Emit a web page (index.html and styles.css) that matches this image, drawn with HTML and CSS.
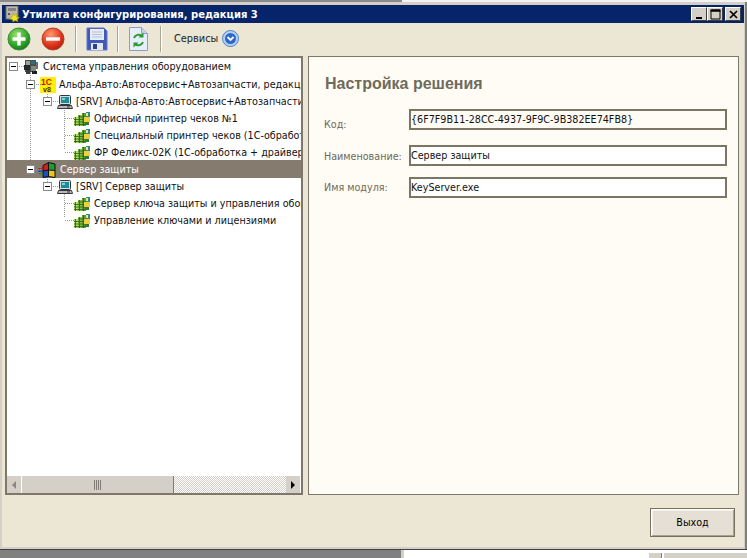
FILE: index.html
```html
<!DOCTYPE html>
<html lang="ru">
<head>
<meta charset="utf-8">
<title>Утилита конфигурирования, редакция 3</title>
<link rel="stylesheet" href="styles.css">
</head>
<body>
<svg class="defs" width="0" height="0" aria-hidden="true">
  <symbol id="i-sys" viewBox="0 0 16 16">
    <rect x="2" y="1" width="11" height="12" fill="#4a4f4a"/>
    <rect x="3" y="2" width="4" height="4" fill="#9aa39a"/>
    <rect x="8" y="2" width="4" height="3" fill="#2f6f7a"/>
    <rect x="1" y="6" width="6" height="5" fill="#23282a"/>
    <rect x="8" y="7" width="5" height="5" fill="#7e8a80"/>
    <rect x="3" y="11" width="4" height="4" fill="#3b3f3a"/>
    <rect x="9" y="12" width="5" height="3" fill="#1c1f1c"/>
    <rect x="13" y="3" width="2" height="7" fill="#6b736b"/>
  </symbol>
  <symbol id="i-mod" viewBox="0 0 16 16">
    <rect x="0" y="6" width="4" height="9" fill="#b4dc6a"/>
    <rect x="4" y="4" width="4" height="11" fill="#86c244"/>
    <rect x="8" y="2" width="4" height="13" fill="#5aa032"/>
    <rect x="12" y="1" width="4" height="7" fill="#2f8a8a"/>
    <path d="M0 8.500h12M0 11h12M0 13.500h12M4 6h8M1.500 6v9M5.500 4v11M9.500 2v13" stroke="#2c5a1c" stroke-width=".8"/>
    <rect x="10" y="6" width="6" height="5" fill="#f1cf3a"/>
    <rect x="11" y="11" width="4" height="3" fill="#2f7a3a"/>
    <rect x="12" y="2" width="2" height="3" fill="#f1e48a"/>
  </symbol>
  <symbol id="i-pc" viewBox="0 0 16 16">
    <rect x="2.500" y="1.500" width="11" height="9" rx="1" fill="#d8dce0" stroke="#33373c"/>
    <rect x="4" y="3" width="8" height="6" fill="#1b8f97"/>
    <rect x="5" y="4" width="3" height="2" fill="#7fd4d8"/>
    <path d="M1.500 11.500h13l1 3H.5z" fill="#b7bbc0" stroke="#33373c"/>
    <rect x="10" y="12.500" width="3" height="1" fill="#333"/>
  </symbol>
  <symbol id="i-win" viewBox="0 0 18 16">
    <path d="M5 3.500l5.500-3v7.500L5 9z" fill="#d0201c"/>
    <path d="M10.500 .5l6.500 1.500v6.500l-6.500-.5z" fill="#1f9b2f"/>
    <path d="M5 9l5.500-1v7.500L5 15.500z" fill="#1d4fc0"/>
    <path d="M10.500 8l6.500 .5V15l-6.500-.5z" fill="#e8c81e"/>
    <path d="M5 3.500l5.500-3 6.500 1.500V15.500L10.500 14.500 5 15.500z M10.500 .5v14M5 9l5.500-1 6.500 .5" fill="none" stroke="#111" stroke-width="1"/>
    <rect x="0" y="6" width="4.500" height="1.500" fill="#d0201c"/>
    <rect x="0" y="8.500" width="4.500" height="1.500" fill="#1d4fc0"/>
    <rect x="1" y="11" width="3.500" height="1.500" fill="#1f9b2f"/>
  </symbol>
</svg>

<div class="top-edge"><span class="top-dark"></span><span class="top-light"></span></div>

<main class="window">
  <header class="titlebar">
    <svg class="title-icon" width="16" height="16" viewBox="0 0 16 16" aria-hidden="true">
      <rect x="1" y="0" width="12" height="13" fill="#b9b7ae" stroke="#6d6c66"/>
      <rect x="3" y="2" width="8" height="3" fill="#85837c"/>
      <rect x="3" y="7" width="2" height="2" fill="#555"/>
      <path d="M8 7l1.500 2.500L12 8l-.5 3 3 .5-2.500 1.500 1 2.500-3-1-2 1.500-.5-2.500-3-.5 2.500-2z" fill="#f2e21a" stroke="#a89a00" stroke-width=".5"/>
    </svg>
    <h1 class="title">Утилита конфигурирования, редакция 3</h1>
    <div class="caption-buttons">
      <span class="cap-btn"><svg width="15" height="13" viewBox="0 0 15 13"><rect x="4" y="9" width="6" height="2" fill="#000"/></svg></span>
      <span class="cap-btn cap-max"><svg width="15" height="13" viewBox="0 0 15 13"><path d="M3 2h9v9H3z M3 3h9" fill="none" stroke="#000"/><rect x="2.500" y="1.500" width="10" height="2" fill="#000"/></svg></span>
      <span class="cap-btn"><svg width="15" height="13" viewBox="0 0 15 13"><path d="M4 3l7 7M11 3l-7 7" stroke="#000" stroke-width="1.700"/></svg></span>
    </div>
  </header>

  <nav class="toolbar">
    <svg class="tb-round" width="24" height="24" viewBox="0 0 24 24" aria-hidden="true">
      <defs><radialGradient id="gg" cx=".4" cy=".3" r=".8"><stop offset="0" stop-color="#9be36a"/><stop offset=".6" stop-color="#2fa52a"/><stop offset="1" stop-color="#0f6b1a"/></radialGradient>
      <radialGradient id="gr" cx=".4" cy=".3" r=".8"><stop offset="0" stop-color="#ff9a70"/><stop offset=".6" stop-color="#e0341c"/><stop offset="1" stop-color="#a3170c"/></radialGradient></defs>
      <circle cx="12" cy="12" r="11" fill="url(#gg)" stroke="#3c8a3a"/>
      <path d="M12 5.500v13M5.500 12h13" stroke="#fff" stroke-width="3.400"/>
    </svg>
    <svg class="tb-round tb-minus" width="24" height="24" viewBox="0 0 24 24" aria-hidden="true">
      <circle cx="12" cy="12" r="11" fill="url(#gr)" stroke="#b8402a"/>
      <path d="M5 12h14" stroke="#fff" stroke-width="3.400"/>
    </svg>
    <span class="tb-sep tb-sep-a"></span>
    <svg class="tb-save" width="22" height="24" viewBox="0 0 22 24" aria-hidden="true">
      <path d="M1 1h17l3 3v19H1z" fill="#4058b8" stroke="#5c74d0"/>
      <rect x="4" y="2" width="14" height="11" fill="#e8ecf6"/>
      <path d="M6 5h10M6 7.500h10M6 10h10" stroke="#b4bfd8"/>
      <rect x="5" y="16" width="12" height="7" fill="#e4e6ee"/>
      <rect x="7" y="17" width="4" height="5" fill="#2c3f8f"/>
    </svg>
    <span class="tb-sep tb-sep-b"></span>
    <svg class="tb-doc" width="19" height="24" viewBox="0 0 19 24" aria-hidden="true">
      <path d="M.5 .5h12l6 6v17H.5z" fill="#e7eefb" stroke="#8d9cc8"/>
      <path d="M12.500 .5v6h6" fill="#c8d4ee" stroke="#8d9cc8"/>
      <path d="M5 11a5 5 0 0 1 8-2" fill="none" stroke="#2a9a2a" stroke-width="2"/>
      <path d="M14.500 5.500v5h-5z" fill="#2a9a2a"/>
      <path d="M14 15a5 5 0 0 1-8 2" fill="none" stroke="#2a9a2a" stroke-width="2"/>
      <path d="M4.500 20.500v-5h5z" fill="#2a9a2a"/>
    </svg>
    <span class="tb-sep tb-sep-c"></span>
    <span class="tb-label">Сервисы</span>
    <svg class="tb-services" width="17" height="17" viewBox="0 0 17 17" aria-hidden="true">
      <circle cx="8.500" cy="8.500" r="8" fill="#b9d0f0" stroke="#4f7fc8"/>
      <circle cx="8.500" cy="8.500" r="5.500" fill="#2a68cc"/>
      <path d="M5.500 7l3 3 3-3" fill="none" stroke="#fff" stroke-width="1.800"/>
    </svg>
  </nav>

  <section class="panels">
    <div class="tree-panel">
      <div class="tree">
        <span class="guide guide-b"></span>
        <span class="guide guide-c"></span>
        <span class="guide guide-d"></span>
        <span class="guide guide-e"></span>
        <span class="guide guide-f"></span>

        <div class="row l0"><span class="toggle"></span><svg class="ico" width="16" height="16"><use href="#i-sys"/></svg><span class="lbl">Система управления оборудованием</span></div>
        <div class="row l1"><span class="toggle"></span><svg class="ico ico-1c" width="16" height="16" viewBox="0 0 16 16"><rect width="16" height="16" rx="1" fill="#ffef00"/><text class="logo-top" x="1" y="7.500">1С</text><text class="logo-bottom" x="3" y="14.500">v8</text></svg><span class="lbl">Альфа-Авто:Автосервис+Автозапчасти, редакция 4.1</span></div>
        <div class="row l2"><span class="toggle"></span><svg class="ico" width="16" height="16"><use href="#i-pc"/></svg><span class="lbl">[SRV] Альфа-Авто:Автосервис+Автозапчасти, редакция</span></div>
        <div class="row l3"><span class="elbow"></span><svg class="ico" width="16" height="16"><use href="#i-mod"/></svg><span class="lbl">Офисный принтер чеков №1</span></div>
        <div class="row l3"><span class="elbow"></span><svg class="ico" width="16" height="16"><use href="#i-mod"/></svg><span class="lbl">Специальный принтер чеков (1С-обработка + драйвер)</span></div>
        <div class="row l3"><span class="elbow"></span><svg class="ico" width="16" height="16"><use href="#i-mod"/></svg><span class="lbl">ФР Феликс-02К (1С-обработка + драйвер)</span></div>
        <div class="row l1 selected"><span class="toggle"></span><svg class="ico ico-win" width="18" height="16"><use href="#i-win"/></svg><span class="lbl">Сервер защиты</span></div>
        <div class="row l2"><span class="toggle"></span><svg class="ico" width="16" height="16"><use href="#i-pc"/></svg><span class="lbl">[SRV] Сервер защиты</span></div>
        <div class="row l3"><span class="elbow"></span><svg class="ico" width="16" height="16"><use href="#i-mod"/></svg><span class="lbl">Сервер ключа защиты и управления оборудованием</span></div>
        <div class="row l3"><span class="elbow"></span><svg class="ico" width="16" height="16"><use href="#i-mod"/></svg><span class="lbl">Управление ключами и лицензиями</span></div>
      </div>
      <div class="hscroll">
        <span class="sb-btn"><svg width="14" height="16" viewBox="0 0 14 16"><path d="M9 4v8L5 8z" fill="#8a8780"/></svg></span>
        <span class="sb-thumb"><svg width="8" height="10" viewBox="0 0 8 10"><path d="M.5 0v10M2.500 0v10M4.500 0v10M6.500 0v10" stroke="#807c75"/></svg></span>
        <span class="sb-track"></span>
        <span class="sb-btn"><svg width="14" height="16" viewBox="0 0 14 16"><path d="M5 4v8l4-4z" fill="#000"/></svg></span>
      </div>
    </div>

    <div class="detail">
      <h2 class="detail-title">Настройка решения</h2>
      <div class="field field-code"><span class="field-label">Код:</span><span class="field-value value-code">{6F7F9B11-28CC-4937-9F9C-9B382EE74FB8}</span></div>
      <div class="field field-name"><span class="field-label">Наименование:</span><span class="field-value">Сервер защиты</span></div>
      <div class="field field-module"><span class="field-label">Имя модуля:</span><span class="field-value">KeyServer.exe</span></div>
    </div>
  </section>

  <footer class="footer"><button class="exit" type="button">Выход</button></footer>
</main>

<div class="bottom-edge">
  <span class="be-gray"></span>
  <span class="be-light"></span>
  <div class="be-white"><span class="be-scroll-btn"></span><span class="be-scroll-bar"></span></div>
</div>
</body>
</html>
```

FILE: styles.css
```css
* { box-sizing: border-box; }
html, body { margin: 0; padding: 0; }
body {
  width: 747px;
  height: 558px;
  overflow: hidden;
  background: #808080;
  font-family: "DejaVu Sans", Tahoma, sans-serif;
  font-size: 9.600px;
  color: #000;
  display: flex;
  flex-direction: column;
}
.defs { position: absolute; }

.top-edge { height: 2px; display: flex; flex: none; }
.top-dark { width: 402px; background: #8a8a8a; }
.top-light { flex: 1; background: #f4f4f4; }

.window {
  flex: none;
  width: 745px;
  height: 547px;
  background: #ece6d5;
  border-left: 2px solid #d4d0c8;
  border-right: 1px solid #d4d0c8;
  border-top: 3px solid #d4d0c8;
  border-bottom: 2px solid #d4d0c8;
  display: flex;
  flex-direction: column;
}

.titlebar {
  height: 18px;
  flex: none;
  background: #06246a;
  display: flex;
  align-items: center;
  padding-left: 3px;
}
.title-icon { flex: none; }
.title {
  margin: 0 0 0 1px;
  font-family: "DejaVu Sans", Tahoma, sans-serif;
  font-size: 10px;
  font-weight: bold;
  color: #fff;
  white-space: nowrap;
}
.caption-buttons { margin-left: auto; display: flex; padding-right: 3px; }
.cap-btn {
  width: 16px;
  height: 14px;
  background: #d4d0c8;
  border-top: 1px solid #fff;
  border-left: 1px solid #fff;
  border-right: 1px solid #404040;
  border-bottom: 1px solid #404040;
  display: flex;
  align-items: center;
  justify-content: center;
}
.cap-btn svg { flex: none; }
.cap-max { margin-right: 2px; }

.toolbar {
  height: 33px;
  flex: none;
  display: flex;
  align-items: center;
  padding: 0 0 2px 5px;
}
.tb-round { flex: none; }
.tb-minus { margin-left: 10px; }
.tb-sep { height: 26px; background: #a8a498; border-right: 1px solid #fff; width: 2px; flex: none; }
.tb-sep-a { margin-left: 10px; }
.tb-save { margin-left: 9px; flex: none; }
.tb-sep-b { margin-left: 9px; }
.tb-doc { margin-left: 10px; flex: none; }
.tb-sep-c { margin-left: 12px; }
.tb-label { margin-left: 12px; color: #222; white-space: nowrap; width: 48px; font-size: 9.800px; }
.tb-services { flex: none; }

.panels {
  flex: none;
  height: 439px;
  padding: 0 5px 0 3px;
  display: flex;
  gap: 5px;
}
.tree-panel {
  width: 298px;
  flex: none;
  background: #fff;
  border: 2px solid #7d776c;
  display: flex;
  flex-direction: column;
  overflow: hidden;
}
.tree { position: relative; flex: 1; overflow: hidden; }
.row {
  height: 17px;
  display: flex;
  align-items: center;
  white-space: nowrap;
  position: relative;
}
.row.l0 { padding-left: 2px; height: 18px; padding-bottom: 1px; }
.row.l1 { padding-left: 19px; }
.row.l2 { padding-left: 36px; }
.row.l3 { padding-left: 58px; }
.toggle {
  position: relative;
  width: 9px;
  height: 9px;
  flex: none;
  background: #fff;
  border: 1px solid #8b8b8b;
  z-index: 1;
}
.toggle::before {
  content: "";
  position: absolute;
  left: 1px;
  top: 3px;
  width: 5px;
  height: 1px;
  background: #000;
}
.row .toggle::after {
  content: "";
  position: absolute;
  left: 9px;
  top: 3px;
  width: 5px;
  border-top: 1px dotted #999;
}
.elbow { width: 9px; flex: none; border-top: 1px dotted #999; }
.ico { flex: none; margin-left: 5px; }
.l3 .ico { margin-left: 0; }
.ico-win { margin-left: 3px; margin-right: 1px; }
.logo-top { font-family: "Liberation Sans", sans-serif; font-size: 8.500px; font-weight: bold; fill: #c8101a; }
.logo-bottom { font-family: "Liberation Sans", sans-serif; font-size: 7px; font-weight: bold; fill: #5a1a10; }
.lbl { margin-left: 3px; color: #111; }
.l0 .lbl { margin-left: 4px; }
.l3 .lbl { margin-left: 4px; }
.selected { background: #857b6f; box-shadow: 0 -1px 0 #857b6f; }
.selected .lbl { color: #fff; }

.guide { position: absolute; width: 0; border-left: 1px dotted #999; }
.guide-b { left: 23px; top: 14px; height: 100px; }
.guide-c { left: 40px; top: 31px; height: 10px; }
.guide-d { left: 57px; top: 48px; height: 43px; }
.guide-e { left: 40px; top: 116px; height: 10px; }
.guide-f { left: 57px; top: 133px; height: 26px; }

.hscroll { height: 17px; flex: none; display: flex; }
.sb-btn {
  width: 15px;
  background: #d4d0c8;
  border-right: 1px solid #fff;
  display: flex;
  align-items: center;
  justify-content: center;
  flex: none;
}
.sb-thumb {
  width: 152px;
  background: #d4d0c8;
  border-right: 1px solid #807c75;
  display: flex;
  align-items: center;
  justify-content: center;
  flex: none;
}
.sb-track {
  flex: 1;
  background: repeating-conic-gradient(#d4d0c8 0 25%, #fff 0 50%) 0 0 / 2px 2px;
}

.detail {
  flex: 1;
  background: #fffcf6;
  border: 1px solid #7d776c;
  padding: 17px 11px 0 15px;
}
.detail-title {
  margin: 0 0 16px 1px;
  font-family: "Liberation Sans", Arial, sans-serif;
  font-size: 16px;
  font-weight: bold;
  color: #6f6b5b;
  line-height: 19px;
}
.field { display: flex; align-items: center; }
.field-name { margin-top: 15px; }
.field-module { margin-top: 11px; }
.field-label { width: 85px; flex: none; color: #6e6858; white-space: nowrap; }
.field-code .field-label { margin-top: 5px; margin-bottom: -5px; }
.field-name .field-label { margin-top: 1px; margin-bottom: -1px; }
.field-value {
  flex: 1;
  height: 21px;
  background: #fff;
  border: 2px solid #7a7564;
  padding-left: 0;
  line-height: 17px;
  color: #111;
  white-space: nowrap;
}
.value-code { background: #fffcf6; }

.footer {
  flex: 1;
  display: flex;
  justify-content: flex-end;
  align-items: flex-start;
  padding: 13px 9px 0 0;
}
.exit {
  width: 85px;
  height: 29px;
  background: #e6dfd5;
  border: 1px solid #77705f;
  box-shadow: inset 1px 1px 0 #fff, inset -1px -1px 0 #a8a294, inset 2px 2px 0 #f5f1ea;
  font-family: "DejaVu Sans", Tahoma, sans-serif;
  font-size: 9.600px;
  color: #000;
  padding: 0;
}

.bottom-edge {
  flex: 1;
  display: flex;
  border-top: 1px solid #404040;
  min-height: 0;
}
.be-gray { width: 401px; background: #808080; }
.be-light { width: 3px; background: #d4d0c8; }
.be-white { flex: 1; background: #fff; display: flex; padding: 3px 0 0 245px; }
.be-scroll-btn { width: 13px; background: #d4d0c8; border-right: 1px solid #808080; }
.be-scroll-bar { flex: 1; background: #d4d0c8; margin-left: 2px; }
```
